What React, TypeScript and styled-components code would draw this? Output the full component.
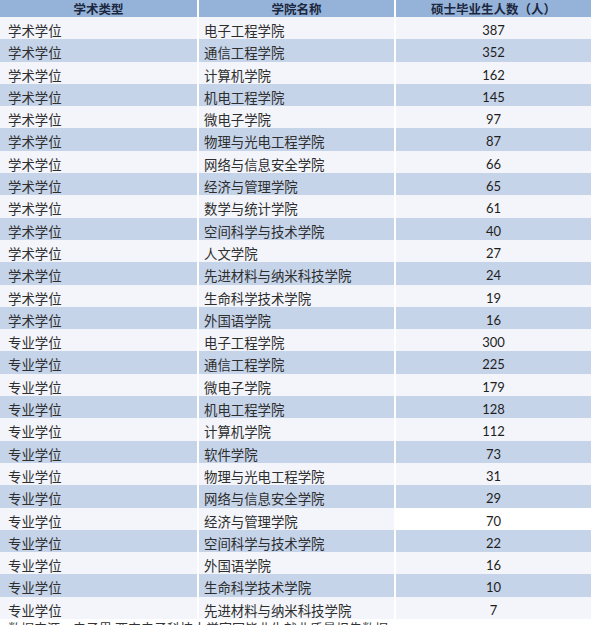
import React from 'react';
import styled, { createGlobalStyle } from 'styled-components';

const GlobalStyle = createGlobalStyle`
  body {
    margin: 0;
    background: #ffffff;
    font-family: "Noto Sans CJK SC", "Liberation Sans", sans-serif;
  }
`;

type Row = { kind: string; school: string; count: number; plain?: boolean };

const rows: Row[] = [
  { kind: '学术学位', school: '电子工程学院', count: 387 },
  { kind: '学术学位', school: '通信工程学院', count: 352 },
  { kind: '学术学位', school: '计算机学院', count: 162 },
  { kind: '学术学位', school: '机电工程学院', count: 145 },
  { kind: '学术学位', school: '微电子学院', count: 97 },
  { kind: '学术学位', school: '物理与光电工程学院', count: 87 },
  { kind: '学术学位', school: '网络与信息安全学院', count: 66 },
  { kind: '学术学位', school: '经济与管理学院', count: 65 },
  { kind: '学术学位', school: '数学与统计学院', count: 61 },
  { kind: '学术学位', school: '空间科学与技术学院', count: 40 },
  { kind: '学术学位', school: '人文学院', count: 27 },
  { kind: '学术学位', school: '先进材料与纳米科技学院', count: 24 },
  { kind: '学术学位', school: '生命科学技术学院', count: 19 },
  { kind: '学术学位', school: '外国语学院', count: 16 },
  { kind: '专业学位', school: '电子工程学院', count: 300 },
  { kind: '专业学位', school: '通信工程学院', count: 225 },
  { kind: '专业学位', school: '微电子学院', count: 179 },
  { kind: '专业学位', school: '机电工程学院', count: 128 },
  { kind: '专业学位', school: '计算机学院', count: 112 },
  { kind: '专业学位', school: '软件学院', count: 73 },
  { kind: '专业学位', school: '物理与光电工程学院', count: 31 },
  { kind: '专业学位', school: '网络与信息安全学院', count: 29 },
  { kind: '专业学位', school: '经济与管理学院', count: 70, plain: true },
  { kind: '专业学位', school: '空间科学与技术学院', count: 22 },
  { kind: '专业学位', school: '外国语学院', count: 16 },
  { kind: '专业学位', school: '生命科学技术学院', count: 10 },
  { kind: '专业学位', school: '先进材料与纳米科技学院', count: 7 },
];

const Page = styled.div`
  width: 593px;
  height: 625px;
  overflow: hidden;
`;

const Table = styled.div`
  display: grid;
  grid-template-columns: 197px 195px 195px;
  grid-template-rows: 17px;
  grid-auto-rows: 22.3px;
  column-gap: 2px;
  width: 591px;
`;

const HeadCell = styled.div`
  background: #95b3d9;
  color: #1c2740;
  font-weight: 700;
  font-size: 12.5px;
  line-height: 17px;
  text-align: center;
  white-space: nowrap;
`;

const Cell = styled.div<{ $band: boolean; $white?: boolean }>`
  background: ${(p) => (p.$white ? '#ffffff' : p.$band ? '#c6d4e9' : '#f3f5fa')};
  color: #2e2e2e;
  font-size: 13.4px;
  line-height: 22px;
  padding: 2px 0 0 8px;
  white-space: nowrap;
  overflow: hidden;
`;

const SchoolCell = styled(Cell)`
  padding-left: 5px;
`;

const NumberCell = styled(Cell)`
  padding-left: 0;
  text-align: center;
  font-family: Lato, "Open Sans", sans-serif;
  font-size: 13px;
  color: #1e1e1e;
`;

const Caption = styled.p`
  margin: 1px 0 0 8px;
  font-size: 13px;
  line-height: 16px;
  color: #333;
  white-space: nowrap;
`;

export default function App() {
  return (
    <Page>
      <GlobalStyle />
      <Table>
        <HeadCell>学术类型</HeadCell>
        <HeadCell>学院名称</HeadCell>
        <HeadCell>硕士毕业生人数（人）</HeadCell>
        {rows.map((r, i) => (
          <React.Fragment key={i}>
            <Cell $band={i % 2 === 1}>{r.kind}</Cell>
            <SchoolCell $band={i % 2 === 1}>{r.school}</SchoolCell>
            <NumberCell $band={i % 2 === 1} $white={r.plain}>
              {r.count}
            </NumberCell>
          </React.Fragment>
        ))}
      </Table>
      <Caption>数据来源：电子界 西安电子科技大学官网毕业生就业质量报告数据</Caption>
    </Page>
  );
}
